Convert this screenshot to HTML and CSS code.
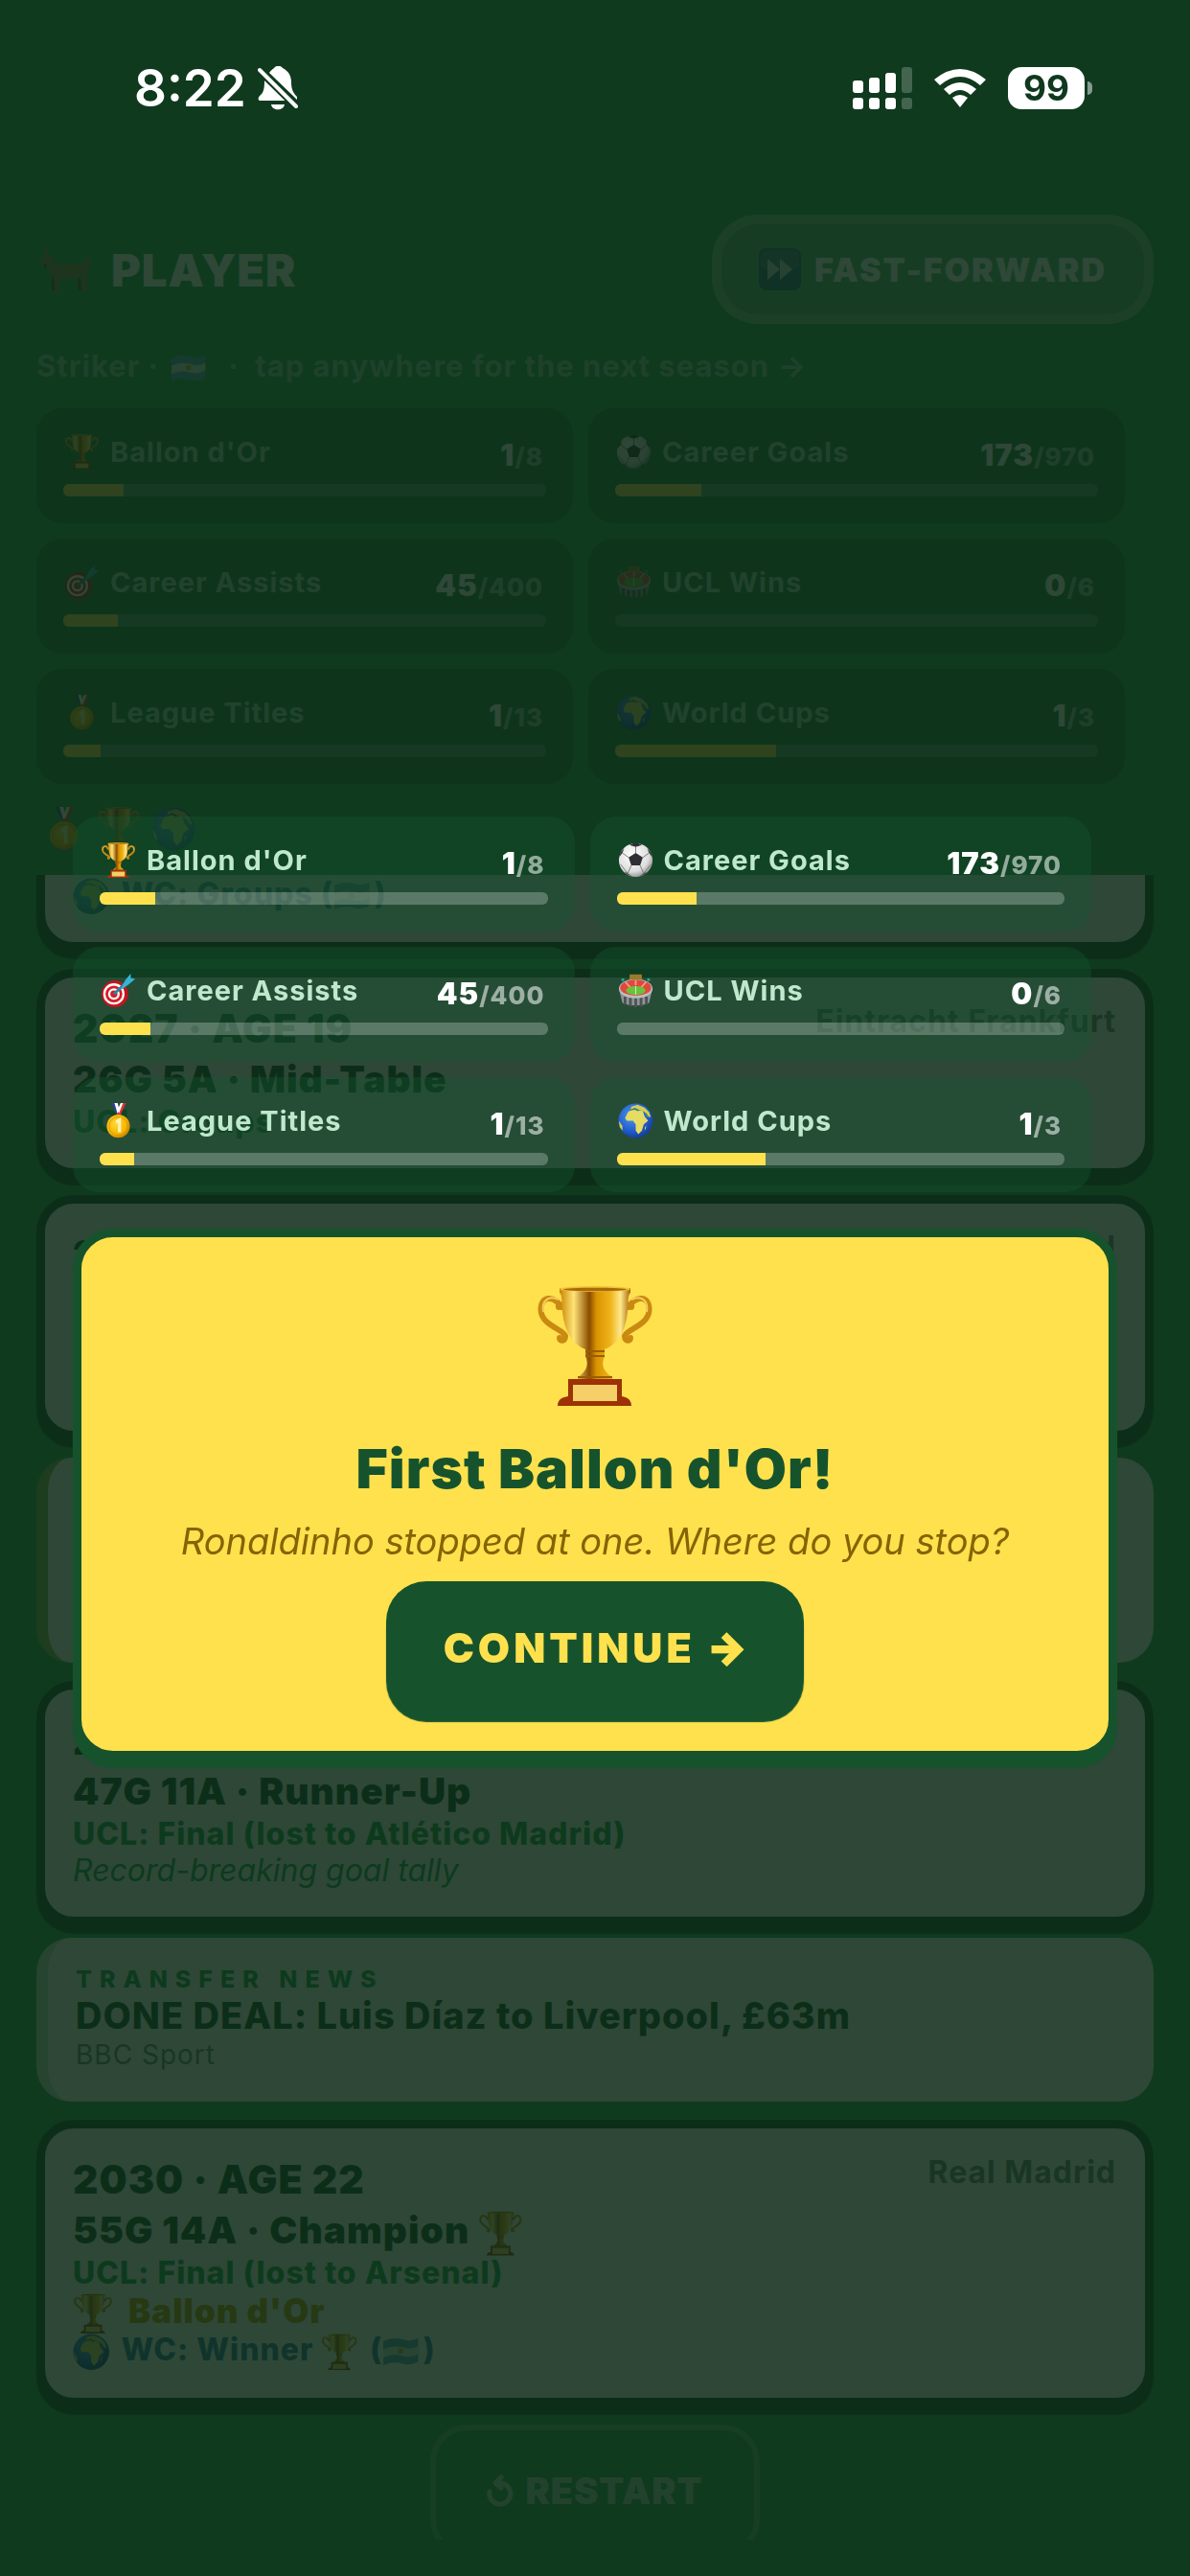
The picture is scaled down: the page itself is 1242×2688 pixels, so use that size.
FILE: index.html
```
<!DOCTYPE html>
<html lang="en">
<head>
    <meta charset="UTF-8">
    <meta name="viewport" content="width=device-width, initial-scale=1.0">
    <title>Player Career</title>
    <link rel="stylesheet" href="styles.css">
</head>
<body>
    <svg class="sprite" aria-hidden="true">
        <defs>
            <linearGradient id="gold" x1="0" x2="1">
                <stop offset="0" stop-color="#c98400"/>
                <stop offset=".2" stop-color="#ffe477"/>
                <stop offset=".42" stop-color="#8a4c00"/>
                <stop offset=".52" stop-color="#d99300"/>
                <stop offset=".72" stop-color="#f0b41c"/>
                <stop offset=".86" stop-color="#ffe98c"/>
                <stop offset="1" stop-color="#a86400"/>
            </linearGradient>
            <radialGradient id="ocean" cx=".4" cy=".35" r=".7">
                <stop offset="0" stop-color="#4f9bf0"/>
                <stop offset=".6" stop-color="#2460cf"/>
                <stop offset="1" stop-color="#123a8c"/>
            </radialGradient>
            <radialGradient id="leather" cx=".4" cy=".35" r=".7">
                <stop offset="0" stop-color="#ffffff"/>
                <stop offset=".7" stop-color="#dddddd"/>
                <stop offset="1" stop-color="#8c8c8c"/>
            </radialGradient>
            <radialGradient id="coin" cx=".4" cy=".4" r=".65">
                <stop offset="0" stop-color="#ffd83a"/>
                <stop offset=".7" stop-color="#f5b400"/>
                <stop offset="1" stop-color="#c27c00"/>
            </radialGradient>
        </defs>
        <symbol id="trophy" viewBox="0 0 120 126">
            <g fill="none" stroke="#c98a12" stroke-width="6" stroke-linecap="round">
                <path d="M25 23C17 10 3 11 3.500 26C4 42 27 46 29 53C29 59 23 59 23 55M22 23c-1-3 2-4 3-1"/>
                <path d="M95 23C103 10 117 11 116.500 26C116 42 93 46 91 53C91 59 97 59 97 55M98 23c1-3-2-4-3-1"/>
            </g>
            <path d="M22 15C12 10 4 16 6 28M98 15C108 10 116 16 114 28" fill="none" stroke="#f3cf5a" stroke-width="2"/>
            <path fill="url(#gold)" d="M23 3H97V8C94 10 95 18 94 28C92 48 84 62 70 67V74C66 84 69 90 78 96V99H42V96C51 90 54 84 50 74V67C36 62 28 48 26 28C25 18 26 10 23 8Z"/>
            <ellipse cx="60" cy="4" rx="37" ry="3" fill="#f2c23a"/>
            <ellipse cx="60" cy="4.500" rx="33" ry="1.800" fill="#a86a06"/>
            <path d="M50 69H70M50 74H70M42 96H78" stroke="#9a5c04" stroke-width="2"/>
            <path fill="#9c3206" d="M32 98H88V116C93 117 98 119 98 126H21C21 119 26 117 32 116Z"/>
            <rect x="37" y="104" width="46" height="17" fill="#f5cf68"/>
        </symbol>
        <symbol id="medal" viewBox="0 0 36 46">
            <path fill="#2d3f9e" d="M9 0H15L20 14H16Z"/>
            <path fill="#fff" d="M13 0H17L20 11 17 14Z"/>
            <path fill="#d8323c" d="M24 0H28L21 15H16Z"/>
            <path fill="#fff" d="M21 0H24L19 13 17 9Z"/>
            <circle cx="18" cy="30" r="15" fill="url(#coin)"/>
            <circle cx="18" cy="30" r="12" fill="none" stroke="#d69500" stroke-width="1"/>
            <path d="M15 25L19.500 22V38" fill="none" stroke="#fff3b0" stroke-width="4"/>
        </symbol>
        <symbol id="globe" viewBox="0 0 40 40">
            <circle cx="20" cy="20" r="19.500" fill="url(#ocean)"/>
            <path fill="#e6dc63" d="M10 13C11 9 15 7 20 8L28 9 30 15 34 20 29 24 27 31 23 35 20 31 20 24 17 20 10 20 8 17Z"/>
            <path fill="#d4cf55" d="M15 4L22 2 30 5 35 10 37 16 33 15 30 10 25 8 20 6 14 8ZM1 20L5 26 5 31 2 27ZM30 28L32 25 31 31Z"/>
            <path fill="none" stroke="#2c6a3a" stroke-width="1" d="M14 8l5-2 4 3M31 11l3 4"/>
        </symbol>
        <symbol id="ball" viewBox="0 0 40 40">
            <circle cx="20" cy="20" r="19" fill="url(#leather)"/>
            <path fill="#2f2f33" d="M20 12L28 17 25 26H15L12 17ZM13 3L20 5 27 3 23 1H17ZM1 17L5 12 7 7 3 11ZM39 17L35 12 33 7 37 11ZM7 33L11 35 16 38 10 36ZM33 33L29 35 24 38 30 36Z"/>
            <path fill="none" stroke="#777" stroke-width="1" d="M20 12V5M28 17L35 12M25 26L29 35M15 26L11 35M12 17L5 12M3 25L11 35M37 25L29 35"/>
        </symbol>
        <symbol id="target" viewBox="0 0 40 40">
            <circle cx="16" cy="24" r="15" fill="#c8141e"/>
            <circle cx="15" cy="24" r="12" fill="#fff"/>
            <circle cx="15" cy="24" r="9.500" fill="#d41e28"/>
            <circle cx="15" cy="24" r="6.500" fill="#fff"/>
            <circle cx="15" cy="24" r="4" fill="#d41e28"/>
            <path d="M15 24L31 9" stroke="#1f8ba5" stroke-width="3"/>
            <path fill="#35b5d5" d="M22 20L28 8 34 1 34 6 39 7 32 13Z"/>
        </symbol>
        <symbol id="stadium" viewBox="0 0 40 40">
            <path fill="#8d9396" d="M2 22H38L35 34C28 38 12 38 5 34Z"/>
            <path d="M8 27V36M14 28V38M20 28V39M26 28V38M32 27V36" stroke="#4c5254" stroke-width="3"/>
            <ellipse cx="20" cy="18" rx="19" ry="11" fill="#b9bec0"/>
            <ellipse cx="20" cy="17" rx="17.500" ry="9" fill="#e0483c"/>
            <path d="M8 10L14 17M32 10L26 17M20 8V14" stroke="#f29a8f" stroke-width="2"/>
            <ellipse cx="20" cy="20" rx="11" ry="5" fill="#6cc13a"/>
            <path d="M20 15V25" stroke="#d9f2c7" stroke-width="1"/>
            <rect x="13" y="2" width="14" height="6" rx="1" fill="#9a7a2c"/>
            <path d="M4 8h3M33 8h3" stroke="#1cae9b" stroke-width="3"/>
        </symbol>
        <symbol id="goat" viewBox="0 0 54 48">
            <path fill="#8f7a48" d="M1 16L6 11 8 1 10 0 11 8C15 11 16 16 19 18C30 20 40 19 46 18C52 17 49 10 52 8C55 14 54 22 52 26L50 33 52 48H47L45 36 42 32C34 35 27 34 23 33L22 48H17L16 33C12 29 9 23 9 18L4 19Z"/>
            <path fill="#5d431d" d="M14 32L16 33 17 46H14ZM41 33L44 34 45 46H42ZM6 19L9 19 7 26Z"/>
        </symbol>
        <symbol id="forward" viewBox="0 0 44 44">
            <rect width="44" height="44" rx="8" fill="#2f6680"/>
            <rect x="2" y="2" width="40" height="20" rx="6" fill="#457a90"/>
            <path fill="#d2d8d4" d="M9 11L22 22 9 33ZM22 11L35 22 22 33Z"/>
        </symbol>
        <symbol id="flag" viewBox="0 0 38 34">
            <path fill="#5fa5c4" d="M1 6C10 1 18 3 25 5C30 6 34 4 37 3V27C32 30 27 31 20 29C12 27 8 28 1 31Z"/>
            <path fill="#d5e5e0" d="M1 14C10 10 18 11 25 13C30 14 34 12 37 11V19C32 22 27 23 20 21C12 19 8 20 1 23Z"/>
            <circle cx="19" cy="16" r="3" fill="#d8a830"/>
        </symbol>
    </svg>

    <div class="status-bar">
        <div class="status-left">
            <span class="clock">8:22</span>
            <svg class="bell" viewBox="0 0 42 46" fill="#fff" aria-label="Silent">
                <path d="M12 7C14 4 16 3 17 2C19-1 24-1 26 2C32 5 35 10 35 17C35 24 37 28 41 32V35Z"/>
                <path d="M7 15L29 36H3C0 36 0 33 2 31C6 28 7 24 7 15ZM14 40H28C27 47 15 47 14 40Z"/>
                <path d="M2 4L41 43" stroke="#0f391f" stroke-width="8"/>
                <path d="M2 4L40 42" stroke="#fff" stroke-width="4" stroke-linecap="round"/>
            </svg>
        </div>
        <div class="status-right">
            <svg class="signal" viewBox="0 0 62 44" fill="#fff" aria-label="Signal">
                <rect y="14" width="11" height="13" rx="3"/>
                <rect x="17" y="11" width="11" height="16" rx="3"/>
                <rect x="34" y="6" width="11" height="21" rx="3"/>
                <rect x="51" width="11" height="27" rx="3" opacity=".22"/>
                <rect y="32" width="11" height="12" rx="3"/>
                <rect x="17" y="32" width="11" height="12" rx="3"/>
                <rect x="34" y="32" width="11" height="12" rx="3"/>
                <rect x="51" y="32" width="11" height="12" rx="3" opacity=".22"/>
            </svg>
            <svg class="wifi" viewBox="0 0 54 40" fill="#fff" aria-label="Wi-Fi">
                <path d="M0 11Q27-11 54 11L48 17Q27-1 6 17Z"/>
                <path d="M10 21Q27 7 44 21L38 27Q27 17 16 27Z"/>
                <path d="M19 30Q27 24 35 30L27 40Z"/>
            </svg>
            <div class="battery">
                <span class="battery-level">99</span>
                <span class="battery-cap"></span>
            </div>
        </div>
    </div>

    <main class="app">
        <header class="header">
            <h1 class="player"><svg class="goat"><use href="#goat"/></svg>PLAYER</h1>
            <button class="fast-forward"><svg class="ff-icon"><use href="#forward"/></svg>FAST-FORWARD</button>
        </header>
        <p class="subtitle">Striker · <svg class="emoji"><use href="#flag"/></svg> &nbsp;·&nbsp; tap anywhere for the next season →</p>

        <section class="stats">
            <div class="stat">
                <div class="stat-row">
                    <span class="stat-label"><svg class="emoji"><use href="#trophy"/></svg>Ballon d'Or</span>
                    <span class="stat-value">1<small>/8</small></span>
                </div>
                <div class="track"><div class="fill" style="width: 12.5%"></div></div>
            </div>
            <div class="stat">
                <div class="stat-row">
                    <span class="stat-label"><svg class="emoji"><use href="#ball"/></svg>Career Goals</span>
                    <span class="stat-value">173<small>/970</small></span>
                </div>
                <div class="track"><div class="fill" style="width: 17.8%"></div></div>
            </div>
            <div class="stat">
                <div class="stat-row">
                    <span class="stat-label"><svg class="emoji"><use href="#target"/></svg>Career Assists</span>
                    <span class="stat-value">45<small>/400</small></span>
                </div>
                <div class="track"><div class="fill" style="width: 11.3%"></div></div>
            </div>
            <div class="stat">
                <div class="stat-row">
                    <span class="stat-label"><svg class="emoji"><use href="#stadium"/></svg>UCL Wins</span>
                    <span class="stat-value">0<small>/6</small></span>
                </div>
                <div class="track"><div class="fill" style="width: 0%"></div></div>
            </div>
            <div class="stat">
                <div class="stat-row">
                    <span class="stat-label"><svg class="emoji"><use href="#medal"/></svg>League Titles</span>
                    <span class="stat-value">1<small>/13</small></span>
                </div>
                <div class="track"><div class="fill" style="width: 7.7%"></div></div>
            </div>
            <div class="stat">
                <div class="stat-row">
                    <span class="stat-label"><svg class="emoji"><use href="#globe"/></svg>World Cups</span>
                    <span class="stat-value">1<small>/3</small></span>
                </div>
                <div class="track"><div class="fill" style="width: 33.3%"></div></div>
            </div>
        </section>

        <div class="honours">
            <svg><use href="#medal"/></svg>
            <svg><use href="#trophy"/></svg>
            <svg><use href="#globe"/></svg>
        </div>

        <section class="feed">
            <article class="season">
                <p class="ucl">UCL: Groups</p>
                <p class="wc"><svg class="emoji"><use href="#globe"/></svg> WC: Groups (<svg class="emoji"><use href="#flag"/></svg>)</p>
            </article>
            <article class="season">
                <div class="season-head"><h2>2027 · AGE 19</h2><span class="club">Eintracht Frankfurt</span></div>
                <p class="line">26G 5A · Mid-Table</p>
                <p class="ucl">UCL: Groups</p>
            </article>
            <article class="season">
                <div class="season-head"><h2>2028 · AGE 20</h2><span class="club">Real Madrid</span></div>
                <p class="line">38G 9A · Champion</p>
                <p class="ucl">UCL: Semis</p>
                <p class="note">Breakout season</p>
            </article>
            <article class="news rumour">
                <p class="tag">TRANSFER NEWS</p>
                <h3>Record bid confirmed</h3>
                <p class="source">BBC Sport</p>
            </article>
            <article class="season">
                <div class="season-head"><h2>2029 · AGE 21</h2><span class="club">Real Madrid</span></div>
                <p class="line">47G 11A · Runner-Up</p>
                <p class="ucl">UCL: Final (lost to Atlético Madrid)</p>
                <p class="note">Record-breaking goal tally</p>
            </article>
            <article class="news done">
                <p class="tag">TRANSFER NEWS</p>
                <h3>DONE DEAL: Luis Díaz to Liverpool, £63m</h3>
                <p class="source">BBC Sport</p>
            </article>
            <article class="season">
                <div class="season-head"><h2>2030 · AGE 22</h2><span class="club">Real Madrid</span></div>
                <p class="line">55G 14A · Champion <svg class="emoji"><use href="#trophy"/></svg></p>
                <p class="ucl">UCL: Final (lost to Arsenal)</p>
                <p class="award"><svg class="emoji"><use href="#trophy"/></svg> Ballon d'Or</p>
                <p class="wc"><svg class="emoji"><use href="#globe"/></svg> WC: Winner <svg class="emoji"><use href="#trophy"/></svg> (<svg class="emoji"><use href="#flag"/></svg>)</p>
            </article>
        </section>

        <footer class="footer">
            <button class="restart">
                <svg class="restart-icon" viewBox="0 0 28 34"><path d="M3 18A11 11 0 1 0 14 9M15 3L9 9 15 14" fill="none" stroke="currentColor" stroke-width="5" stroke-linecap="round" stroke-linejoin="round"/></svg>RESTART
            </button>
        </footer>
    </main>

    <div class="overlay">
        <section class="stats">
            <div class="stat">
                <div class="stat-row">
                    <span class="stat-label"><svg class="emoji"><use href="#trophy"/></svg>Ballon d'Or</span>
                    <span class="stat-value">1<small>/8</small></span>
                </div>
                <div class="track"><div class="fill" style="width: 12.5%"></div></div>
            </div>
            <div class="stat">
                <div class="stat-row">
                    <span class="stat-label"><svg class="emoji"><use href="#ball"/></svg>Career Goals</span>
                    <span class="stat-value">173<small>/970</small></span>
                </div>
                <div class="track"><div class="fill" style="width: 17.8%"></div></div>
            </div>
            <div class="stat">
                <div class="stat-row">
                    <span class="stat-label"><svg class="emoji"><use href="#target"/></svg>Career Assists</span>
                    <span class="stat-value">45<small>/400</small></span>
                </div>
                <div class="track"><div class="fill" style="width: 11.3%"></div></div>
            </div>
            <div class="stat">
                <div class="stat-row">
                    <span class="stat-label"><svg class="emoji"><use href="#stadium"/></svg>UCL Wins</span>
                    <span class="stat-value">0<small>/6</small></span>
                </div>
                <div class="track"><div class="fill" style="width: 0%"></div></div>
            </div>
            <div class="stat">
                <div class="stat-row">
                    <span class="stat-label"><svg class="emoji"><use href="#medal"/></svg>League Titles</span>
                    <span class="stat-value">1<small>/13</small></span>
                </div>
                <div class="track"><div class="fill" style="width: 7.7%"></div></div>
            </div>
            <div class="stat">
                <div class="stat-row">
                    <span class="stat-label"><svg class="emoji"><use href="#globe"/></svg>World Cups</span>
                    <span class="stat-value">1<small>/3</small></span>
                </div>
                <div class="track"><div class="fill" style="width: 33.3%"></div></div>
            </div>
        </section>

        <div class="modal" role="dialog" aria-labelledby="modalTitle">
            <svg class="modal-trophy"><use href="#trophy"/></svg>
            <h2 id="modalTitle">First Ballon d'Or!</h2>
            <p>Ronaldinho stopped at one. Where do you stop?</p>
            <button class="continue">CONTINUE <span class="arrow">→</span></button>
        </div>
    </div>
</body>
</html>
```
FILE: styles.css
```
* {
    box-sizing: border-box;
}
body {
    margin: 0;
    height: 100vh;
    display: flex;
    flex-direction: column;
    overflow: hidden;
    background: #26a252;
    color: #fff;
    font-family: Inter, "Liberation Sans", sans-serif;
}
h1, h2, h3, p {
    margin: 0;
}
button {
    font-family: inherit;
    cursor: pointer;
}
.sprite {
    position: absolute;
    width: 0;
    height: 0;
}

/* status bar, stays above the overlay */
.status-bar {
    position: relative;
    z-index: 3;
    display: flex;
    justify-content: space-between;
    padding: 60px 102px 0 140px;
    height: 224px;
    flex: none;
}
.status-left, .status-right {
    display: flex;
    align-items: center;
    height: 64px;
}
.status-left {
    gap: 12px;
}
.status-right {
    gap: 23px;
}
.clock {
    font-size: 53px;
    line-height: 64px;
    font-weight: 600;
}
.bell {
    width: 42px;
    height: 46px;
}
.signal {
    width: 62px;
    height: 44px;
}
.wifi {
    width: 54px;
    height: 40px;
}
.battery {
    display: flex;
    align-items: center;
    gap: 3px;
}
.battery-level {
    width: 80px;
    height: 44px;
    border-radius: 14px;
    background: #fff;
    color: #0f391f;
    font-size: 37px;
    line-height: 44px;
    font-weight: 700;
    text-align: center;
}
.battery-cap {
    width: 5px;
    height: 14px;
    border-radius: 0 6px 6px 0;
    background: #fff;
    opacity: .5;
}

.app {
    flex: 1;
    min-height: 0;
    display: flex;
    flex-direction: column;
    padding: 0 38px 38px;
}
.header {
    display: flex;
    justify-content: space-between;
    align-items: center;
}
.player {
    display: flex;
    align-items: center;
    gap: 20px;
    font-size: 47px;
    font-weight: 900;
    letter-spacing: 1px;
}
.goat {
    width: 58px;
    height: 48px;
}
.fast-forward {
    display: flex;
    align-items: center;
    gap: 14px;
    height: 114px;
    padding: 0 39px;
    border: 10px solid rgba(255,255,255,.24);
    border-radius: 48px;
    background: rgba(255,255,255,.22);
    color: #fff;
    font-size: 34px;
    font-weight: 900;
    letter-spacing: 2px;
}
.ff-icon {
    width: 44px;
    height: 44px;
}
.subtitle {
    margin-top: 24px;
    height: 40px;
    line-height: 40px;
    font-size: 31px;
    font-weight: 700;
    letter-spacing: 1px;
    color: rgba(255,255,255,.5);
}
.emoji {
    width: 1.2em;
    height: 1.2em;
    margin: -6px 0;
    vertical-align: middle;
}
.subtitle .emoji {
    margin: 0 6px 0 4px;
}

.stats {
    display: grid;
    grid-template-columns: 1fr 1fr;
    gap: 16px;
    margin: 24px 30px 0 0;
}
.stat {
    height: 120px;
    padding: 24px 28px 0;
    border-radius: 27px;
    background: rgba(0,0,0,.22);
}
.stat-row {
    display: flex;
    justify-content: space-between;
    height: 46px;
    line-height: 44px;
}
.stat-label {
    display: flex;
    align-items: center;
    gap: 10px;
    height: 43px;
    font-size: 29px;
    font-weight: 700;
    letter-spacing: 1px;
    color: rgba(191,232,205,.85);
}
.stat-label .emoji {
    width: 39px;
    height: 37px;
}
.stat-value {
    font-size: 31px;
    line-height: 50px;
    font-weight: 900;
    letter-spacing: 1px;
    padding-right: 3px;
}
.stat-value small {
    font-size: 26px;
    font-weight: 800;
    opacity: .55;
}
.track {
    height: 13px;
    margin-top: 9px;
    border-radius: 6px;
    background: rgba(255,255,255,.25);
    overflow: hidden;
}
.fill {
    height: 100%;
    background: #ffe14d;
}

.honours {
    display: flex;
    gap: 11px;
    margin: 24px 0 25px 6px;
}
.honours svg {
    width: 46px;
    height: 46px;
}

/* newest season is at the bottom, older ones scroll off the top */
.feed {
    flex: 1;
    min-height: 0;
    overflow: hidden;
    display: flex;
    flex-direction: column;
    justify-content: flex-end;
    gap: 19px;
    margin: 0 -12px;
    padding: 0 12px 19px;
}
.season {
    flex: none;
    padding: 26px 30px 29px 29px;
    border: 9px solid #14532d;
    border-radius: 39px;
    background: #fff;
    box-shadow: 0 9px 1px #14532d;
    color: #14532d;
}
.season-head {
    display: flex;
    justify-content: space-between;
}
.season h2 {
    font-size: 41px;
    line-height: 54px;
    font-weight: 900;
    letter-spacing: 1px;
}
.club {
    font-size: 32px;
    line-height: 40px;
    font-weight: 700;
    letter-spacing: 1px;
    color: #6b8577;
}
.season p {
    font-size: 32px;
    line-height: 38px;
    font-weight: 700;
    letter-spacing: 1px;
}
.season .line {
    font-size: 39px;
    line-height: 52px;
    font-weight: 900;
}
.season .ucl {
    font-weight: 800;
    color: #16a34a;
}
.season .award {
    font-size: 35px;
    line-height: 40px;
    font-weight: 900;
    color: #ca9a04;
}
.season .award .emoji {
    margin-right: 8px;
}
.season .wc {
    line-height: 42px;
    font-weight: 800;
    color: #2a79b3;
}
.season .wc .emoji {
    margin-right: 4px;
}
.season .note {
    font-weight: 400;
    font-style: italic;
    letter-spacing: 0;
    color: #16a34a;
}
.news {
    flex: none;
    min-height: 171px;
    padding: 28px 31px 30px 29px;
    border-left: 12px solid #c4e6c8;
    border-radius: 36px;
    background: #fff;
    color: #14532d;
}
.news.rumour {
    min-height: 214px;
    border-left-color: #84b950;
}
.news.done {
    margin-top: -6px;
}
.tag {
    font-size: 25px;
    line-height: 30px;
    font-weight: 800;
    letter-spacing: 8px;
    color: #16a34a;
}
.news h3 {
    font-size: 38px;
    line-height: 46px;
    font-weight: 800;
    letter-spacing: 1px;
}
.source {
    font-size: 28px;
    line-height: 36px;
    letter-spacing: 1px;
    color: #6b8577;
}
.footer {
    height: 120px;
    flex: none;
    overflow: hidden;
    display: flex;
    justify-content: center;
    align-items: flex-start;
}
.restart {
    display: flex;
    align-items: center;
    gap: 12px;
    height: 138px;
    padding: 0 53px;
    border: 6px solid rgba(255,255,255,.25);
    border-radius: 39px;
    background: none;
    color: rgba(255,255,255,.65);
    font-size: 38px;
    font-weight: 900;
    letter-spacing: 1px;
}
.restart-icon {
    width: 28px;
    height: 34px;
}

.overlay {
    position: fixed;
    inset: 0;
    z-index: 2;
    display: flex;
    flex-direction: column;
    justify-content: center;
    gap: 38px;
    padding: 0 76px;
    background: rgba(12,41,22,.86);
}
.overlay .stats {
    margin: 0 27px 0 0;
}
.overlay .stat {
    background: rgba(20,90,48,.35);
}
.overlay .stat-label {
    color: #bfe8cd;
}
.modal {
    display: flex;
    flex-direction: column;
    align-items: center;
    padding: 44px 30px 39px;
    border: 9px solid #16532d;
    border-radius: 42px;
    background: #ffe14d;
    box-shadow: 0 9px 1px #16532d;
    color: #16532d;
    text-align: center;
}
.modal-trophy {
    width: 120px;
    height: 138px;
}
.modal h2 {
    margin-top: 25px;
    font-size: 57px;
    line-height: 70px;
    font-weight: 900;
    letter-spacing: 1px;
}
.modal p {
    margin-top: 16px;
    font-size: 38px;
    line-height: 48px;
    font-style: italic;
    color: #856404;
}
.continue {
    height: 138px;
    margin-top: 18px;
    padding: 0 60px;
    border: 0;
    border-radius: 42px;
    background: #16532d;
    box-shadow: 0 9px 1px #16532d;
    color: #ffe14d;
    font-size: 43px;
    font-weight: 900;
    letter-spacing: 4px;
}
.arrow {
    -webkit-text-stroke: 2px #ffe14d;
    letter-spacing: 0;
}
```
